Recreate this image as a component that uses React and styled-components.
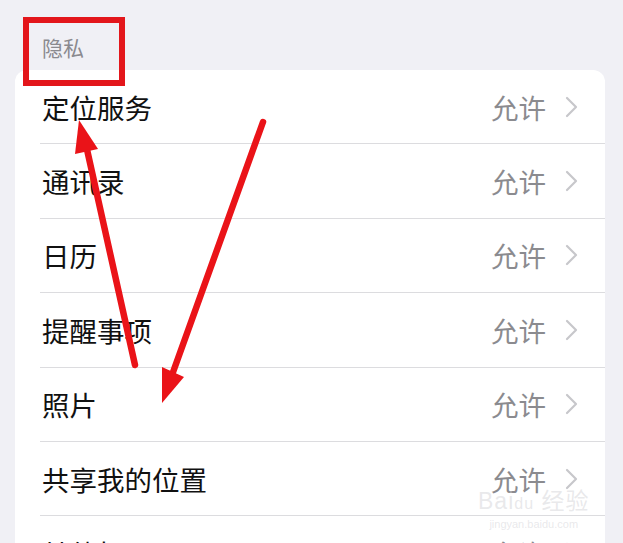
import React from 'react'
import styled, { createGlobalStyle } from 'styled-components'

const GlobalStyle = createGlobalStyle`
    html, body {
        margin: 0;
        padding: 0;
        background: #f0f0f5;
        font-family: "Noto Sans CJK SC", "Noto Sans", sans-serif;
    }
    #root {
        width: 623px;
        height: 543px;
        overflow: hidden;
    }
`

const items = ['定位服务', '通讯录', '日历', '提醒事项', '照片', '共享我的位置', '其他权限']

function Chevron() {
    return (
        <svg width="13" height="22" viewBox="0 0 13 22">
            <path d="M2 2 L11 11 L2 20" fill="none" stroke="#c7c7cb" strokeWidth="2.2" strokeLinecap="round" strokeLinejoin="round" />
        </svg>
    )
}

function App() {
    return (
        <Page>
            <GlobalStyle />
            <SectionTitle>隐私</SectionTitle>
            <Card>
                {items.map((item, index) => (
                    <Row key={index}>
                        <Label>{item}</Label>
                        <Value>允许</Value>
                        <Chevron />
                    </Row>
                ))}
            </Card>

            {/* annotation: red box + arrows drawn on top of the screenshot */}
            <Highlight />
            <Arrows width="623" height="543" viewBox="0 0 623 543">
                <line x1="135" y1="365" x2="86" y2="145" stroke="#ea1318" strokeWidth="6.5" strokeLinecap="round" />
                <polygon points="79,120 75,154 98,149" fill="#ea1318" />
                <line x1="263" y1="122" x2="172" y2="375" stroke="#ea1318" strokeWidth="6.5" strokeLinecap="round" />
                <polygon points="162,403 162,367 184,377" fill="#ea1318" />
            </Arrows>
            <Watermark>
                <span>Bai<em>du</em> 经验</span>
                <small>jingyan.baidu.com</small>
            </Watermark>
        </Page>
    )
}

export default App

const Page = styled.div`
    position: relative;
    width: 623px;
    height: 543px;
    padding-top: 31px;
    box-sizing: border-box;
`
const SectionTitle = styled.div`
    padding-left: 42px;
    font-size: 21px;
    line-height: 32px;
    color: #8a8a8f;
    height: 39px;
`
const Card = styled.div`
    margin-left: 15px;
    width: 590px;
    background: #fff;
    border-radius: 12px;
    padding-left: 25px;
    box-sizing: border-box;
`
const Row = styled.div`
    height: 74.4px;
    box-sizing: border-box;
    display: flex;
    align-items: center;
    border-bottom: 1px solid #dcdcdf;
    padding: 0 27px 0 2px;
`
const Label = styled.div`
    flex: 1;
    font-size: 27.5px;
    color: #111;
`
const Value = styled.div`
    font-size: 27.5px;
    color: #8b8b8f;
    margin-right: 19px;
`
const Highlight = styled.div`
    position: absolute;
    left: 23px;
    top: 17px;
    width: 102px;
    height: 69px;
    border: 6px solid #e3161b;
    box-sizing: border-box;
`
const Arrows = styled.svg`
    position: absolute;
    left: 0;
    top: 0;
    pointer-events: none;
`
const Watermark = styled.div`
    position: absolute;
    left: 478px;
    top: 488px;
    display: flex;
    flex-direction: column;
    align-items: center;
    color: rgba(205, 205, 210, 0.45);
    font-family: "Liberation Sans", "Noto Sans CJK SC", sans-serif;
    span {
        font-size: 23px;
        line-height: 26px;
        letter-spacing: 1px;
    }
    em {
        font-style: normal;
        font-size: 16px;
    }
    small {
        font-size: 11px;
        line-height: 14px;
    }
`
